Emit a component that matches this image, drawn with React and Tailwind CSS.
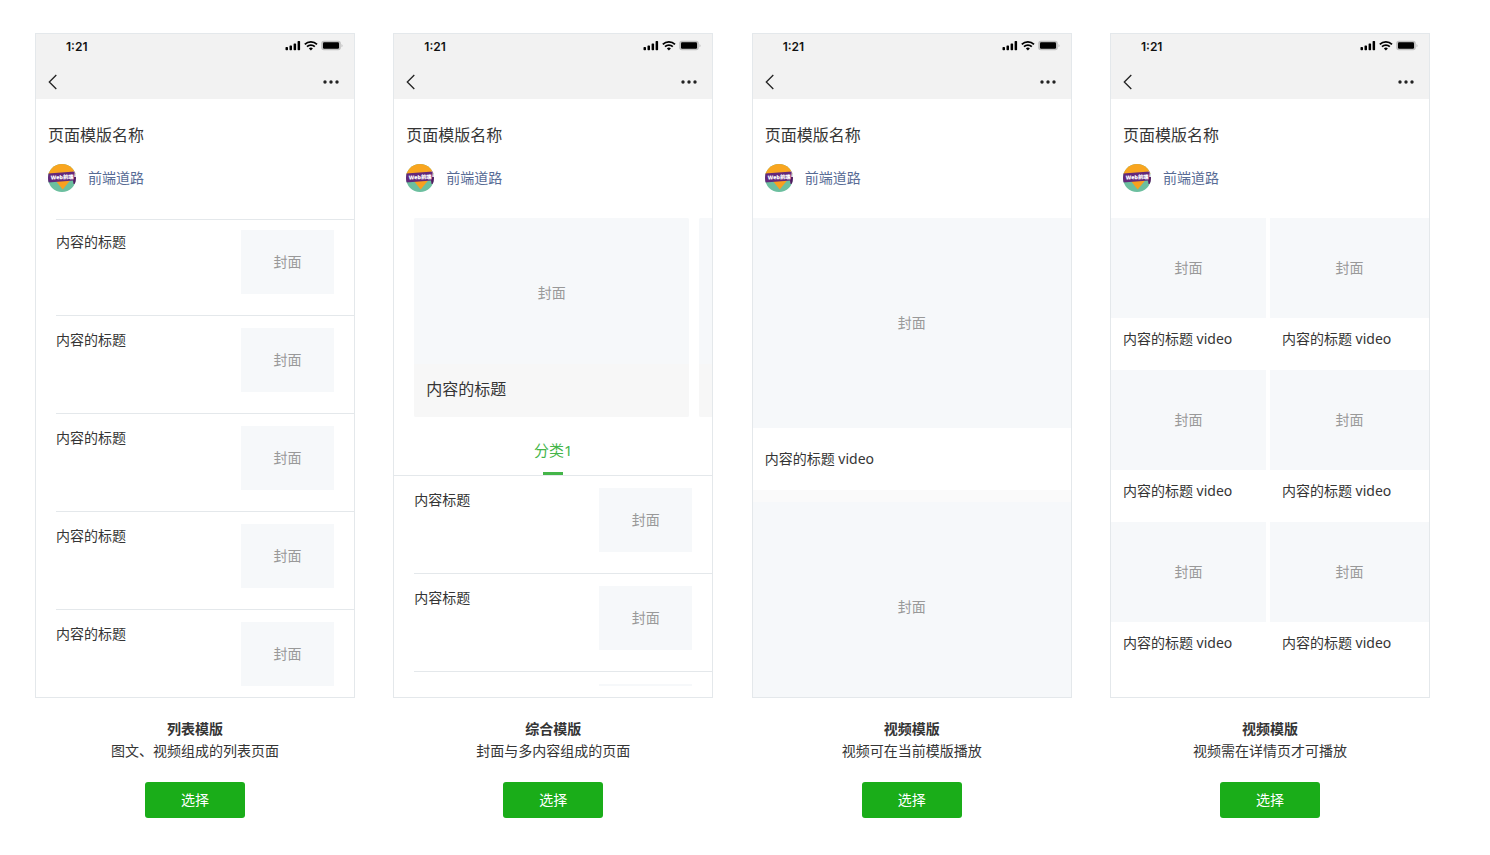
import React from "react";

function StatusIcons() {
  return (
    <svg width="58" height="12" viewBox="0 0 58 12" aria-hidden="true">
      <g fill="#000">
        <rect x="0.5" y="7" width="2.5" height="3.3" rx="0.7" />
        <rect x="4.5" y="5.4" width="2.5" height="4.9" rx="0.7" />
        <rect x="8.6" y="3.4" width="2.5" height="6.9" rx="0.7" />
        <rect x="12.6" y="1" width="2.5" height="9.3" rx="0.7" />
      </g>
      <g fill="none" stroke="#000" strokeWidth="1.8">
        <path d="M19.8 4.3a8.8 8.8 0 0 1 12.2 0" />
        <path d="M22 6.7a5.5 5.5 0 0 1 7.8 0" />
      </g>
      <path d="M23.9 8.4a3 3 0 0 1 4 0l-2 2z" fill="#000" />
      <rect x="36.2" y="0.8" width="19.6" height="9.4" rx="2.6" fill="#c0c0c0" />
      <rect x="38" y="2.3" width="16" height="6.4" rx="1.2" fill="#000" />
      <path d="M56.6 4c1.1.5 1.1 2.8 0 3.3z" fill="#aaa" />
    </svg>
  );
}

function Avatar() {
  return (
    <svg className="h-7 w-7 rounded-full" viewBox="0 0 28 28" aria-hidden="true">
      <rect width="28" height="28" fill="#6cbf9f" />
      <path d="M0 0h28v10H0z" fill="#f9a51f" />
      <path d="M7 16h15.5l-7.8 9.6z" fill="#f9a01f" />
      <path d="M25.5 7h3v16l-3-4z" fill="#efe9f2" />
      <path d="M24.6 13H28v7.6l-2.6-.8z" fill="#4f1c60" />
      <path d="M0 9.6l26.8-2-.9 9L0 18.4z" fill="#64287a" />
      <text
        x="2.6"
        y="15.2"
        fontSize="5.4"
        fontWeight="900"
        fill="#fff"
        transform="rotate(-2 13 14)"
        fontFamily="Noto Sans, Noto Sans CJK SC, sans-serif"
      >
        Web前端
      </text>
    </svg>
  );
}

function Phone({ children }) {
  return (
    <div className="flex h-[665px] w-full flex-col overflow-hidden border border-[#e4e8eb] bg-white">
      <div className="h-[65px] shrink-0 bg-[#f2f2f2]">
        <div className="flex h-[26px] items-center justify-between pl-[30px] pr-[11px]">
          <span className="font-['Inter',sans-serif] text-xs font-semibold text-[#111]">1:21</span>
          <div className="pb-0.5">
            <StatusIcons />
          </div>
        </div>
        <div className="flex h-11 items-center justify-between pr-[15px] pl-3">
          <button type="button" aria-label="返回" className="block">
            <svg width="10" height="16" viewBox="0 0 10 16" fill="none" stroke="#222" strokeWidth="1.3">
              <path d="M8.3 1L1.3 8l7 7" />
            </svg>
          </button>
          <button type="button" aria-label="更多" className="block">
            <svg width="16" height="4" viewBox="0 0 16 4" fill="#222">
              <circle cx="2" cy="2" r="1.7" />
              <circle cx="8" cy="2" r="1.7" />
              <circle cx="14" cy="2" r="1.7" />
            </svg>
          </button>
        </div>
      </div>
      <div className="h-[119px] shrink-0 px-3 pt-6">
        <h2 className="text-base leading-6">页面模版名称</h2>
        <div className="mt-[17px] flex items-center gap-3">
          <Avatar />
          <a href="#" className="text-sm leading-6 text-[#576b95]">
            前端道路
          </a>
        </div>
      </div>
      {children}
    </div>
  );
}

function Cover({ className, label = "封面" }) {
  return (
    <div className={"flex items-center justify-center bg-[#f6f8fa] text-sm text-[#999] " + className}>
      {label}
    </div>
  );
}

function Row({ title, label, className = "border-t pt-3" }) {
  return (
    <li className={"ml-5 flex items-start justify-between border-[#e4e8eb] pr-5 pb-[21px] " + className}>
      <span className="text-sm leading-6">{title}</span>
      <Cover className="h-16 w-[93px]" label={label} />
    </li>
  );
}

function ListPhone() {
  return (
    <Phone>
      <ul className="mt-px mb-[11px] min-h-0 flex-1 overflow-hidden">
        <Row title="内容的标题" className="border-t pt-[10px]" />
        <Row title="内容的标题" />
        <Row title="内容的标题" />
        <Row title="内容的标题" />
        <Row title="内容的标题" />
      </ul>
    </Phone>
  );
}

function SlideCard({ title, label }) {
  return (
    <div className="w-[275px] shrink-0 overflow-hidden rounded-xs bg-[#f6f8fa]">
      <Cover className="h-[150px]" label={label} />
      <p className="-mt-1 h-[53px] bg-[#f7f7f7] pt-3 pl-3 text-base leading-[26px]">{title}</p>
    </div>
  );
}

function MixedPhone() {
  return (
    <Phone>
      <div className="mb-[11px] min-h-0 flex-1 overflow-hidden">
        <div className="flex gap-[10px] overflow-hidden pl-5">
          <SlideCard title="内容的标题" />
          <SlideCard title="" label="" />
        </div>
        <div className="flex h-[59px] items-end justify-center border-b border-[#e4e8eb]">
          <button type="button" className="flex flex-col items-center gap-[10px] text-[15px] leading-6 text-[#44b549]">
            分类1
            <span className="h-[3px] w-5 bg-[#44b549]" />
          </button>
        </div>
        <ul>
          <Row title="内容标题" className="pt-3" />
          <Row title="内容标题" />
          <Row title="" label="" />
        </ul>
      </div>
    </Phone>
  );
}

function VideoPhone() {
  return (
    <Phone>
      <div className="min-h-0 flex-1 overflow-hidden">
        <Cover className="h-[210px]" />
        <p className="h-[62px] px-3 text-sm leading-[62px]">内容的标题 video</p>
        <div className="h-3 bg-[#fafafa]" />
        <Cover className="h-[210px]" />
      </div>
    </Phone>
  );
}

function GridPhone() {
  return (
    <Phone>
      <div className="grid grid-cols-2">
        {[0, 1, 2, 3, 4, 5].map((n) => (
          <div key={n} className="group">
            <div className="group-odd:pr-1">
              <Cover className="h-[100px]" />
            </div>
            <p className="h-[52px] px-3 pt-[9px] text-sm leading-6">内容的标题 video</p>
          </div>
        ))}
      </div>
    </Phone>
  );
}

const templates = [
  { id: "list", name: "列表模版", note: "图文、视频组成的列表页面", Preview: ListPhone },
  { id: "mixed", name: "综合模版", note: "封面与多内容组成的页面", Preview: MixedPhone },
  { id: "video", name: "视频模版", note: "视频可在当前模版播放", Preview: VideoPhone },
  { id: "grid", name: "视频模版", note: "视频需在详情页才可播放", Preview: GridPhone },
];

export default function App() {
  return (
    <main
      lang="zh-CN"
      className="flex min-h-screen items-start justify-between bg-white pt-[33px] pr-[60px] pl-[35px] font-['Noto_Sans','Noto_Sans_CJK_SC',sans-serif] text-[#353535]"
    >
      {templates.map(({ id, name, note, Preview }) => (
        <section key={id} className="flex w-80 flex-col items-center">
          <Preview />
          <h3 className="mt-5 text-sm leading-[22px] font-bold">{name}</h3>
          <p className="text-sm leading-[22px]">{note}</p>
          <button
            type="button"
            className="mt-5 h-9 w-[100px] rounded-[3px] bg-[#1aad19] text-sm text-white"
          >
            选择
          </button>
        </section>
      ))}
    </main>
  );
}
